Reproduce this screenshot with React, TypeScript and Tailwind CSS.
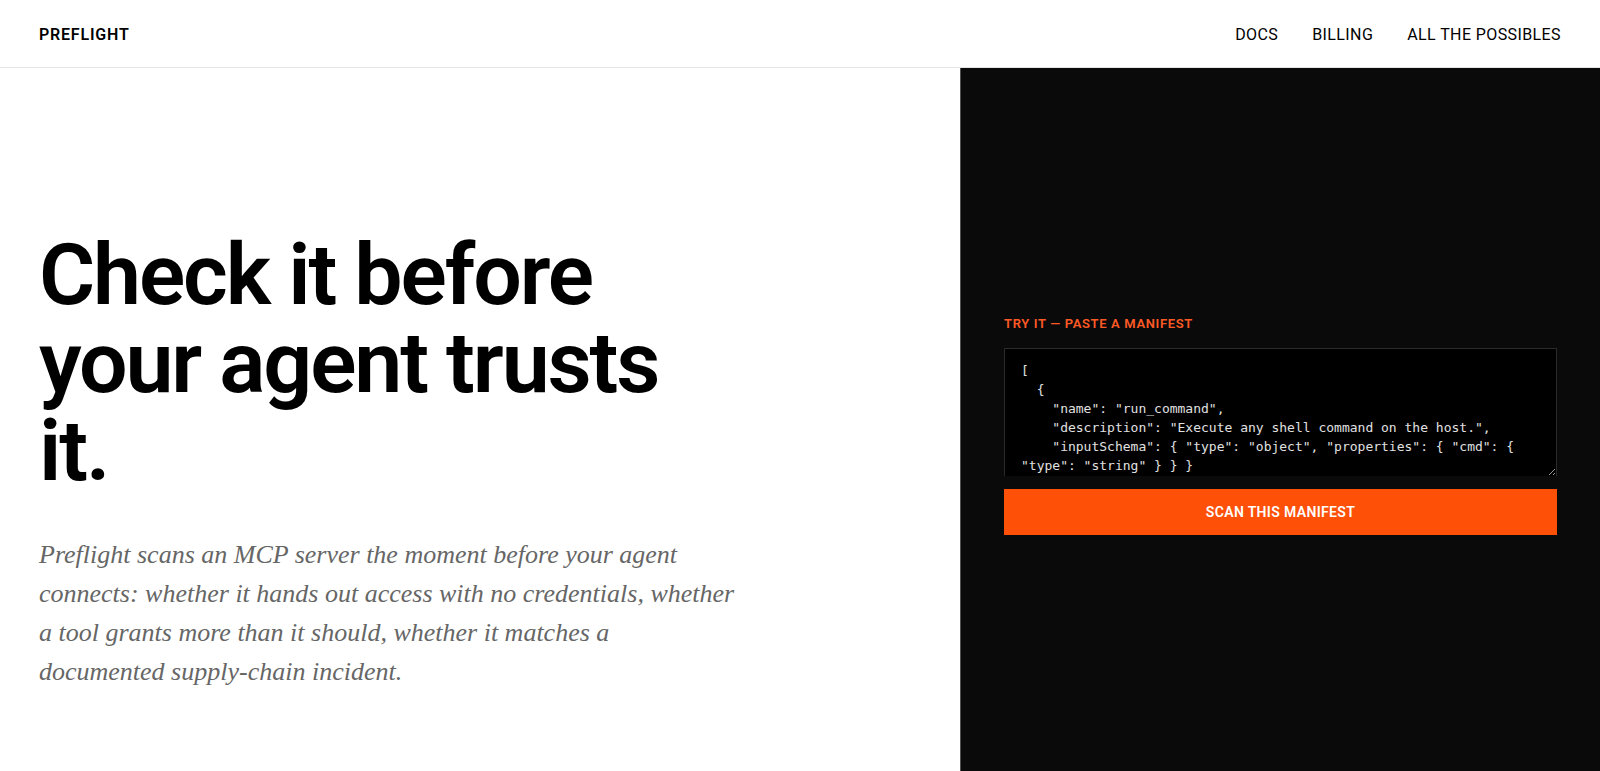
import { useState } from "react";

const NAV_LINKS = [
  { label: "Docs", href: "#docs" },
  { label: "Billing", href: "#billing" },
  { label: "All the possibles", href: "#possibles" },
];

const SAMPLE_MANIFEST = `[
  {
    "name": "run_command",
    "description": "Execute any shell command on the host.",
    "inputSchema": { "type": "object", "properties": { "cmd": { "type": "string" } } }
  }
]`;

function Header() {
  return (
    <header className="flex items-center justify-between border-b border-neutral-200 bg-white px-[39px] pt-[23px] pb-5 text-[16px] leading-6 uppercase">
      <a href="#top" className="font-semibold tracking-wider">
        Preflight
      </a>
      <nav aria-label="Main" className="flex gap-[34px] tracking-wide">
        {NAV_LINKS.map((link) => (
          <a key={link.href} href={link.href}>
            {link.label}
          </a>
        ))}
      </nav>
    </header>
  );
}

function Intro() {
  return (
    <section className="flex flex-col justify-end px-[39px] pt-40 pb-20">
      <h1 className="max-w-[680px] text-[86px] leading-[88px] font-semibold tracking-tight">
        Check it before your agent trusts it.
      </h1>
      <p className="mt-10 max-w-[699px] font-['Liberation_Serif',serif] text-[26px] leading-[39px] text-[#666] italic">
        Preflight scans an MCP server the moment before your agent connects: whether it hands out access with no
        credentials, whether a tool grants more than it should, whether it matches a documented supply-chain incident.
      </p>
    </section>
  );
}

function ManifestForm() {
  const [manifest, setManifest] = useState(SAMPLE_MANIFEST);

  return (
    <section className="flex flex-col justify-center border-l border-neutral-600 bg-[#0a0a0a] px-[43px]">
      <form onSubmit={(e) => e.preventDefault()} className="flex flex-col pt-2.5">
        <label
          htmlFor="manifest"
          className="text-[13px] leading-5 font-semibold tracking-wider text-[#ff5a26] uppercase"
        >
          Try it — paste a manifest
        </label>
        <textarea
          id="manifest"
          value={manifest}
          onChange={(e) => setManifest(e.target.value)}
          spellCheck={false}
          className="mt-[14px] h-32 w-full resize scheme-dark overflow-hidden border border-b-0 border-[#2a2a2a] bg-black px-4 py-3 font-['DejaVu_Sans_Mono',monospace] text-[13px] leading-[19px] text-[#e0e0e0] outline-none"
        />
        <button
          type="submit"
          className="mt-[13px] h-[46px] bg-[#ff5008] text-[14px] font-semibold tracking-wide text-white uppercase"
        >
          Scan this manifest
        </button>
      </form>
    </section>
  );
}

export default function App() {
  return (
    <div className="flex min-h-screen flex-col bg-white font-['Roboto',sans-serif] text-black">
      <Header />
      <main className="grid flex-1 grid-cols-[3fr_2fr]">
        <Intro />
        <ManifestForm />
      </main>
    </div>
  );
}
